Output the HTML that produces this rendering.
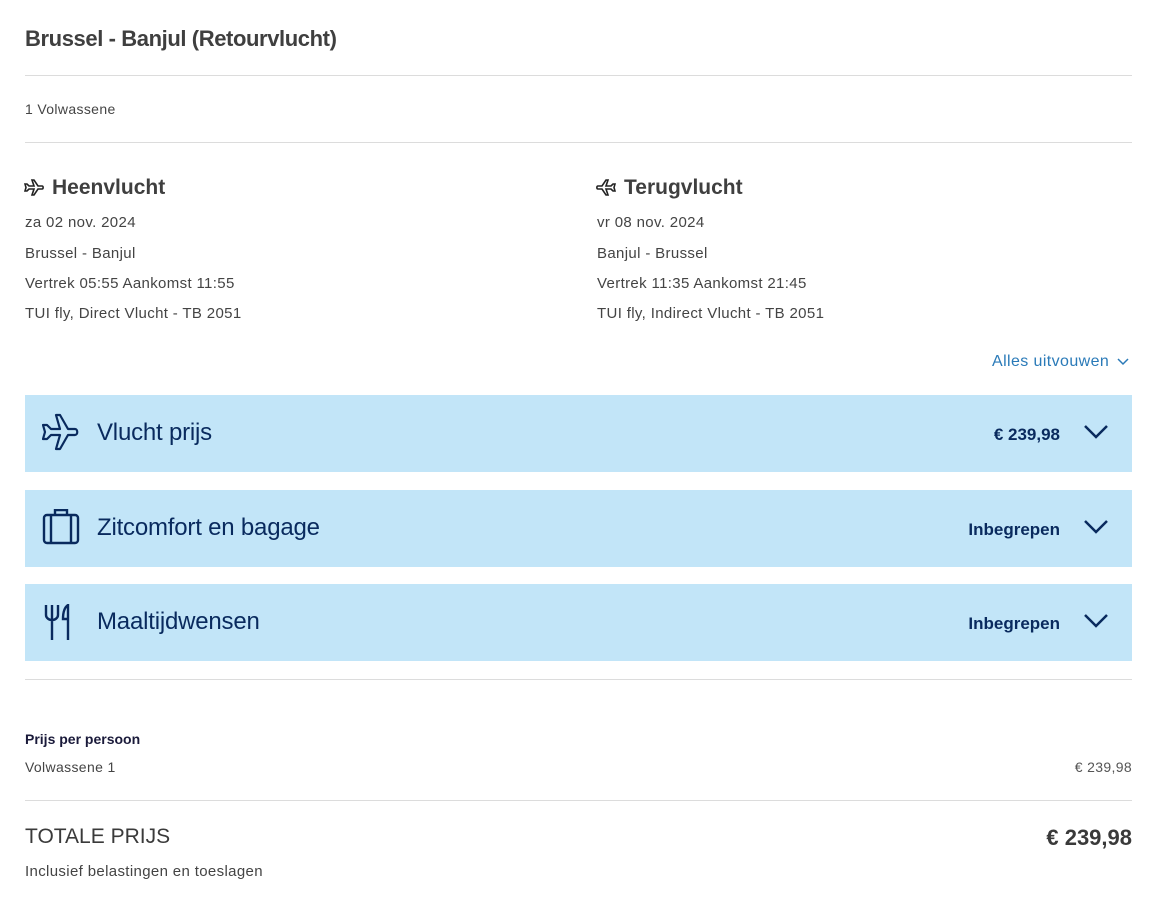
<!DOCTYPE html>
<html><head><meta charset="utf-8"><style>
*{margin:0;padding:0;box-sizing:border-box}
body{width:1171px;height:911px;background:#fff;font-family:"Liberation Sans",sans-serif;color:#3a3a3a;position:relative;overflow:hidden}
.a{position:absolute}
.hr{position:absolute;left:25px;width:1107px;height:1px;background:#dcdcdc}
.t{font-size:15px;color:#444;letter-spacing:0.35px}
.panel{position:absolute;left:25px;width:1107px;height:77px;background:#c2e5f8;color:#092a5e}
.panel .lbl{position:absolute;left:72px;top:24px;font-size:24px;letter-spacing:-0.2px}
.panel .val{position:absolute;right:72px;top:30px;font-size:17px;font-weight:bold}
.panel svg.ch{position:absolute;right:23px;top:29px}
.panel svg.ic{position:absolute;left:17px}
</style></head><body>
<div class="a" style="left:25px;top:26px;font-size:22px;font-weight:bold;color:#3f3f3f;letter-spacing:-0.4px">Brussel - Banjul (Retourvlucht)</div>
<div class="hr" style="top:75px"></div>
<div class="a t" style="left:25px;top:101px;font-size:14px">1 Volwassene</div>
<div class="hr" style="top:142px"></div>

<svg class="a" style="left:24px;top:179px" width="20" height="18" viewBox="0 0 20 18"><path d="M8 1h2l4 6h4c1.5 0 1.5 3 0 3h-4l-4 6H8l2-6H5l-2 2H1l1-3.5L1 5h2l2 2h5z" fill="none" stroke="#222" stroke-width="1.6"/></svg>
<div class="a" style="left:52px;top:176px;font-size:21px;font-weight:bold;color:#3f3f3f">Heenvlucht</div>
<div class="a t" style="left:25px;top:214px">za 02 nov. 2024</div>
<div class="a t" style="left:25px;top:245px">Brussel - Banjul</div>
<div class="a t" style="left:25px;top:275px">Vertrek 05:55 Aankomst 11:55</div>
<div class="a t" style="left:25px;top:305px">TUI fly, Direct Vlucht - TB 2051</div>

<svg class="a" style="left:596px;top:179px;transform:scaleX(-1)" width="20" height="18" viewBox="0 0 20 18"><path d="M8 1h2l4 6h4c1.5 0 1.5 3 0 3h-4l-4 6H8l2-6H5l-2 2H1l1-3.5L1 5h2l2 2h5z" fill="none" stroke="#222" stroke-width="1.6"/></svg>
<div class="a" style="left:624px;top:176px;font-size:21px;font-weight:bold;color:#3f3f3f">Terugvlucht</div>
<div class="a t" style="left:597px;top:214px">vr 08 nov. 2024</div>
<div class="a t" style="left:597px;top:245px">Banjul - Brussel</div>
<div class="a t" style="left:597px;top:275px">Vertrek 11:35 Aankomst 21:45</div>
<div class="a t" style="left:597px;top:305px">TUI fly, Indirect Vlucht - TB 2051</div>

<div class="a" style="left:992px;top:353px;font-size:16px;color:#2a7ab8;letter-spacing:0.4px">Alles uitvouwen</div>
<svg class="a" style="left:1117px;top:358px" width="12" height="8" viewBox="0 0 12 8"><path d="M1 1l5 5 5-5" fill="none" stroke="#2a7ab8" stroke-width="1.5"/></svg>

<div class="panel" style="top:395px">
<svg class="ic" style="top:18px" width="37" height="38" viewBox="0 0 37 38"><path d="M14 2h4l8 14h7c3 0 3 6 0 6h-7l-8 14h-4l4-14H9l-4 4H1l2-7-2-7h4l4 4h9z" fill="none" stroke="#092a5e" stroke-width="2.2" stroke-linejoin="round"/></svg>
<div class="lbl">Vlucht prijs</div><div class="val">€ 239,98</div>
<svg class="ch" width="26" height="16" viewBox="0 0 26 16"><path d="M2 2l11 11L24 2" fill="none" stroke="#092a5e" stroke-width="2.5"/></svg></div>

<div class="panel" style="top:490px">
<svg class="ic" style="top:19px" width="38" height="36" viewBox="0 0 38 36"><rect x="2" y="6" width="34" height="28" rx="3" fill="none" stroke="#092a5e" stroke-width="2.4"/><path d="M13 6V1h12v5M9 6v28M29 6v28" fill="none" stroke="#092a5e" stroke-width="2.4"/></svg>
<div class="lbl">Zitcomfort en bagage</div><div class="val">Inbegrepen</div>
<svg class="ch" width="26" height="16" viewBox="0 0 26 16"><path d="M2 2l11 11L24 2" fill="none" stroke="#092a5e" stroke-width="2.5"/></svg></div>

<div class="panel" style="top:584px">
<svg class="ic" style="top:20px;left:19px" width="34" height="36" viewBox="0 0 34 36"><path d="M2 1v10c0 3 3 5 6 5s6-2 6-5V1M8 1v35M24 36V1c-3 2-5 6-5 14h5" fill="none" stroke="#092a5e" stroke-width="2.4"/></svg>
<div class="lbl">Maaltijdwensen</div><div class="val">Inbegrepen</div>
<svg class="ch" width="26" height="16" viewBox="0 0 26 16"><path d="M2 2l11 11L24 2" fill="none" stroke="#092a5e" stroke-width="2.5"/></svg></div>

<div class="hr" style="top:679px"></div>
<div class="a" style="left:25px;top:731px;font-size:14px;font-weight:bold;color:#1a1a3a">Prijs per persoon</div>
<div class="a t" style="left:25px;top:759px;font-size:14px">Volwassene 1</div>
<div class="a t" style="right:39px;top:759px;font-size:14px;color:#555">€ 239,98</div>
<div class="hr" style="top:800px"></div>
<div class="a" style="left:25px;top:825px;font-size:21px;color:#3a3a3a">TOTALE PRIJS</div>
<div class="a" style="right:39px;top:825px;font-size:22px;font-weight:bold;color:#3a3a3a">€ 239,98</div>
<div class="a t" style="left:25px;top:863px">Inclusief belastingen en toeslagen</div>
</body></html>
